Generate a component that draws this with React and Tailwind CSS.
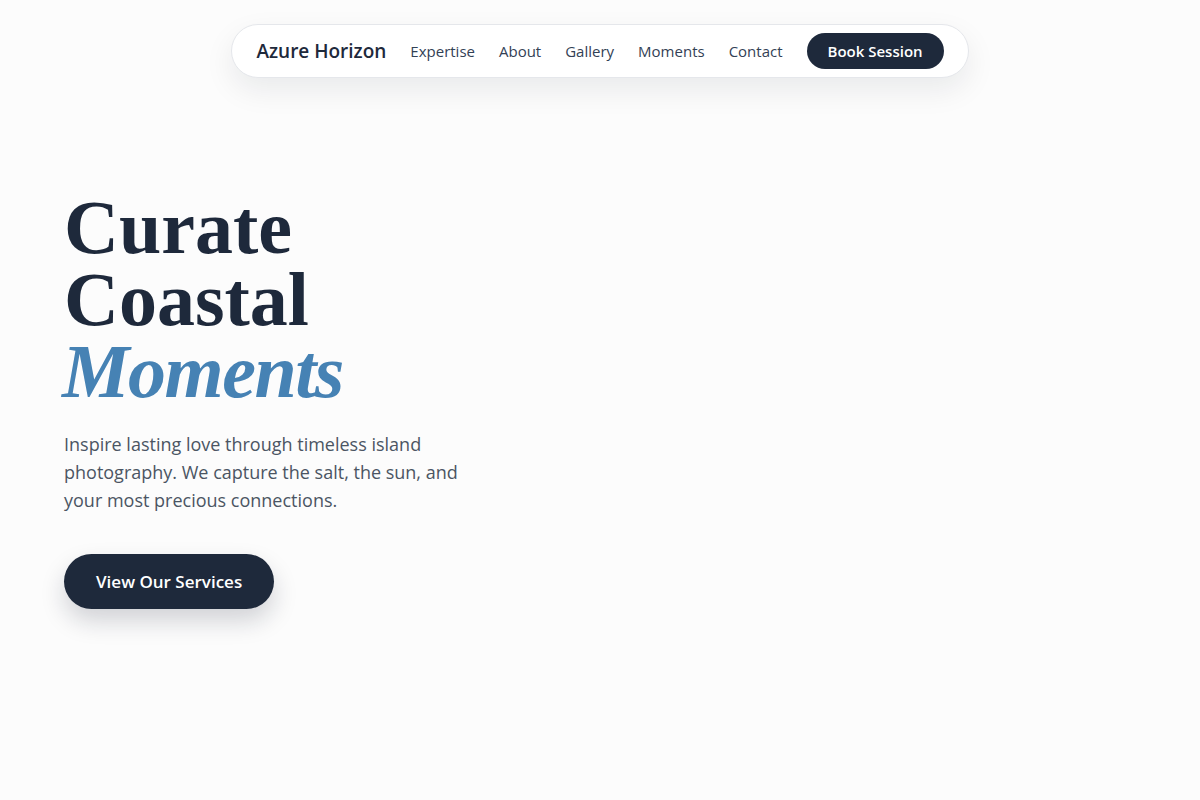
const links = ["Expertise", "About", "Gallery", "Moments", "Contact"];

function Navbar() {
  return (
    <header className="flex justify-center pt-6">
      <nav className="flex items-center gap-6 rounded-full border border-gray-200 bg-white py-2 pl-6 pr-6 shadow-[0_12px_30px_rgba(15,23,42,0.08)]">
        <a href="#" className="text-[19px] font-semibold leading-none text-[#1e293b]">
          Azure Horizon
        </a>
        {links.map((l) => (
          <a key={l} href="#" className="text-[15px] leading-none text-[#334155]">
            {l}
          </a>
        ))}
        <button
          type="button"
          className="h-9 rounded-full bg-[#1e293b] px-[21px] text-[15px] font-semibold text-white"
        >
          Book Session
        </button>
      </nav>
    </header>
  );
}

function Hero() {
  return (
    <section className="px-16 pt-[113px]">
      <h1 className="font-['Liberation_Serif',serif] text-[76px] font-bold leading-[72px] text-[#1e293b]">
        Curate
        <br />
        Coastal
        <br />
        <span className="-ml-[2px] italic tracking-[-1.5px] text-[#4682b4]">Moments</span>
      </h1>
      <p className="mt-[23px] max-w-[420px] text-[18px] leading-7 text-[#4b5563]">
        Inspire lasting love through timeless island photography. We capture
        the salt, the sun, and your most precious connections.
      </p>
      <button
        type="button"
        className="mt-10 flex h-[55px] items-center rounded-full bg-[#1e293b] px-8 text-[17px] font-semibold text-white shadow-[0_12px_24px_rgba(15,23,42,0.18)]"
      >
        View Our Services
      </button>
    </section>
  );
}

export default function App() {
  return (
    <div className="min-h-[800px] bg-[#fcfcfc] font-['Open_Sans',sans-serif]">
      <Navbar />
      <Hero />
    </div>
  );
}
